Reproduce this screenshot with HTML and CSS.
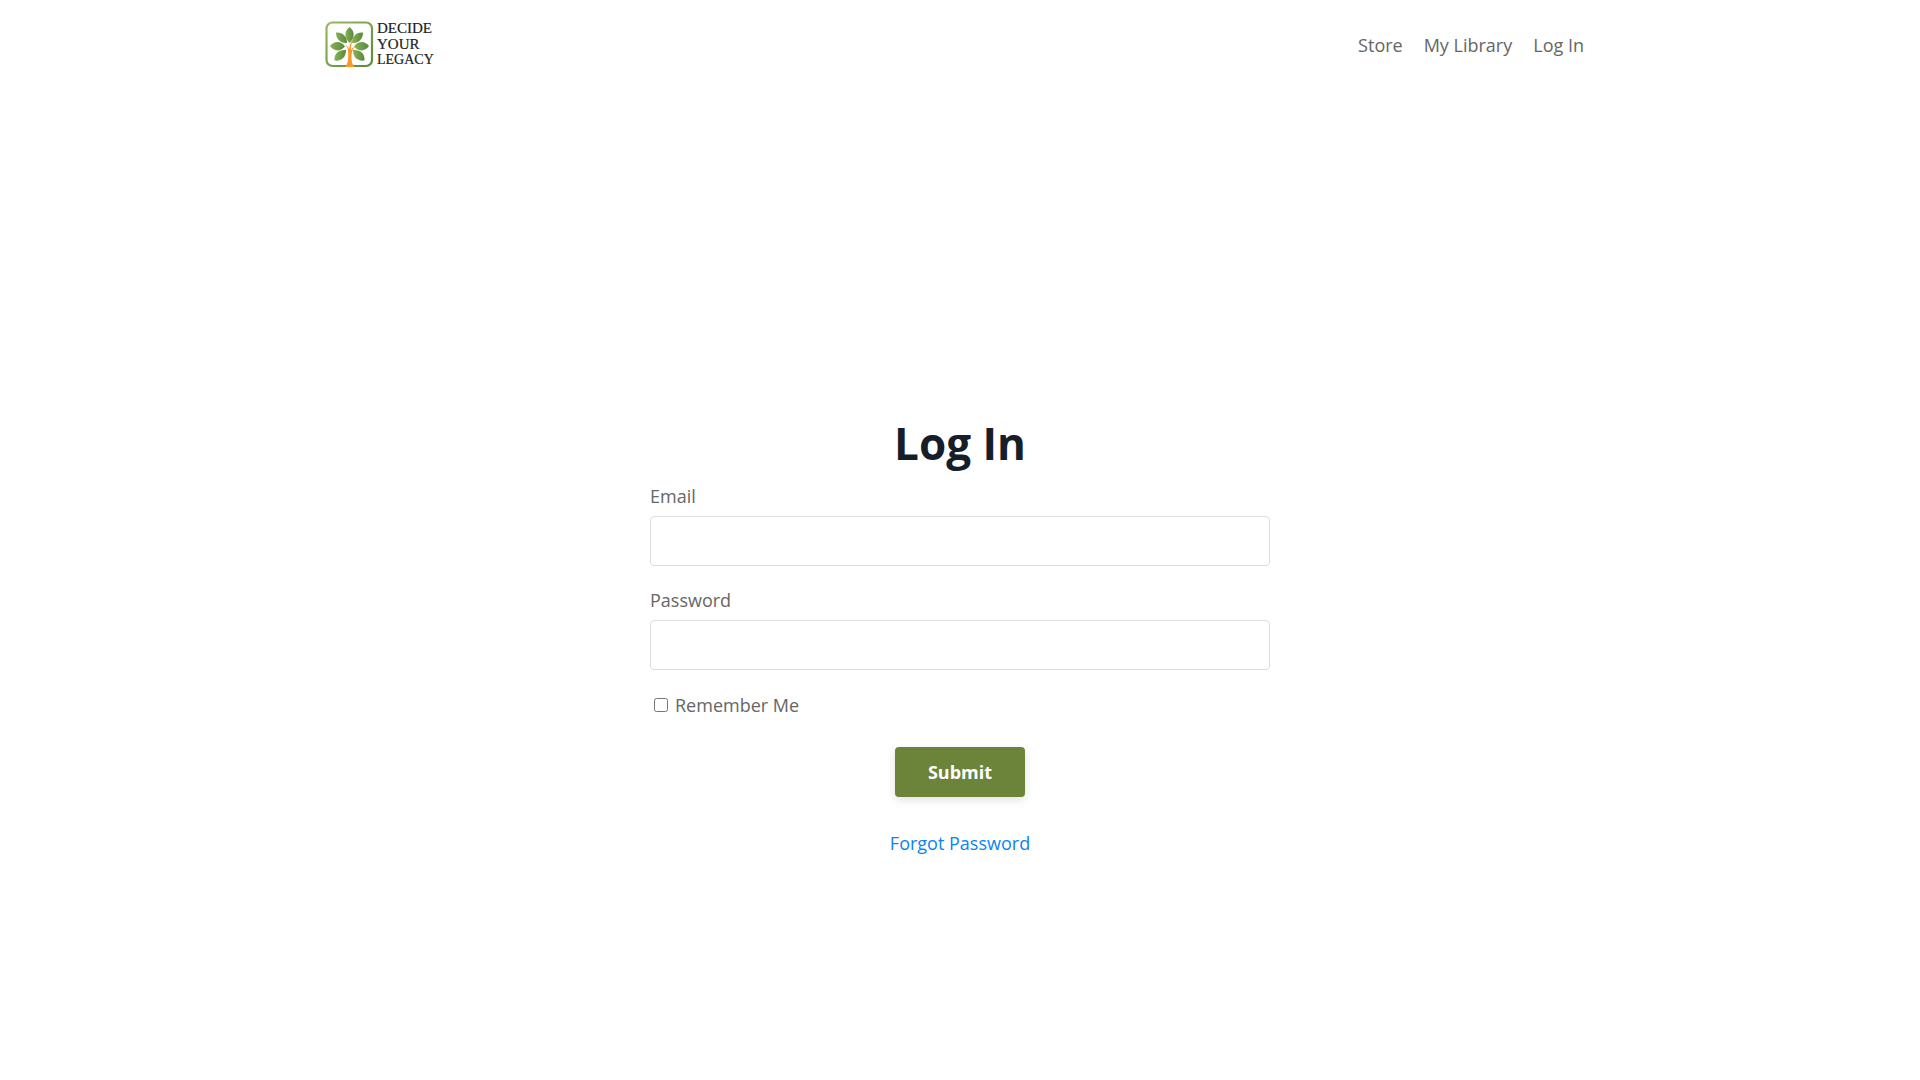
FILE: index.html
```html
<!DOCTYPE html>
<html lang="en">
<head>
  <meta charset="utf-8">
  <meta name="viewport" content="width=device-width, initial-scale=1">
  <title>Log In</title>
  <link rel="stylesheet" href="styles.css">
</head>
<body>
  <header class="header">
    <a class="logo" href="#" aria-label="Decide Your Legacy">
      <svg width="110" height="48" viewBox="0 0 110 48">
        <defs>
          <linearGradient id="frame" x1="0" y1="0" x2="1" y2="1">
            <stop offset="0" stop-color="#9aba5c"/>
            <stop offset="1" stop-color="#5a8a3c"/>
          </linearGradient>
          <linearGradient id="leaf" x1="0" y1="0" x2="1" y2="0">
            <stop offset="0" stop-color="#8bb056"/>
            <stop offset="1" stop-color="#568a3e"/>
          </linearGradient>
        </defs>
        <rect x="1.500" y="1.500" width="45.500" height="43.500" rx="6" fill="#fff" stroke="url(#frame)" stroke-width="2.200"/>
        <g fill="url(#leaf)">
          <path d="M24.500 6C30 10 30 17 24.500 22C19 17 19 10 24.500 6Z"/>
          <path d="M11 11.500C18 11 22 15.500 22 22C15 22.500 11 18 11 11.500Z"/>
          <path d="M38 11.500C31 11 27 15.500 27 22C34 22.500 38 18 38 11.500Z"/>
          <path d="M5 25C9.500 19.500 16 20 20 25.500C15 31 9 30.500 5 25Z"/>
          <path d="M44 25C39.500 19.500 33 20 29 25.500C34 31 40 30.500 44 25Z"/>
          <path d="M9.500 39.500C9 32 14 28.500 21 29C21 36 16.500 40.500 9.500 39.500Z"/>
          <path d="M39.500 39.500C40 32 35 28.500 28 29C28 36 32.500 40.500 39.500 39.500Z"/>
        </g>
        <path d="M20 23C22 25 23 26 24 28C25 23 26 20 28 18C26.500 22 26 25 26 29C27 27.500 28 26.500 30 25.500C27 29 26.500 32 26.500 36C26.500 41 27.500 44 29.500 46H19.500C22.500 44 23 40 23.200 36C23.500 30 23 27 20 23Z" fill="#f79a2b"/>
        <g class="logo-text">
          <text x="52" y="12" font-size="15">DECIDE</text>
          <text x="52" y="28" font-size="15">YOUR</text>
          <text x="52" y="43" font-size="14">LEGACY</text>
        </g>
      </svg>
    </a>
    <nav class="nav">
      <a class="nav-link" href="#">Store</a>
      <a class="nav-link" href="#">My Library</a>
      <a class="nav-link" href="#">Log In</a>
    </nav>
  </header>
  <main class="login">
    <h1 class="title">Log In</h1>
    <form class="form">
      <div class="field">
        <label for="email">Email</label>
        <input class="input" id="email" type="email">
      </div>
      <div class="field">
        <label for="password">Password</label>
        <input class="input" id="password" type="password">
      </div>
      <label class="remember"><input class="check" type="checkbox"> Remember Me</label>
      <button class="submit" type="submit">Submit</button>
      <a class="forgot" href="#">Forgot Password</a>
    </form>
  </main>
</body>
</html>
```
FILE: styles.css
```css
* {
  box-sizing: border-box;
}

body {
  margin: 0;
  background: #fff;
  color: #666;
  font: 18px/28px "Open Sans", sans-serif;
}

.header {
  display: flex;
  align-items: center;
  justify-content: space-between;
  max-width: 1300px;
  height: 89px;
  margin: 0 auto;
  padding: 0 26px 0 15px;
}

.logo svg {
  display: block;
}

.logo-text {
  fill: #222;
  stroke: #222;
  stroke-width: 0.2;
  font-family: "Liberation Serif", serif;
}

.nav {
  display: flex;
  gap: 21px;
}

.nav-link {
  color: inherit;
  text-decoration: none;
}

.login {
  max-width: 660px;
  margin: 0 auto;
  padding: 325px 20px 40px;
}

.title {
  margin: 0 0 10px;
  color: #161e2a;
  font-size: 44px;
  line-height: 58px;
  font-weight: 700;
  text-align: center;
}

.form {
  display: flex;
  flex-direction: column;
}

.field {
  display: flex;
  flex-direction: column;
  gap: 6px;
  margin-bottom: 20px;
}

.input {
  width: 100%;
  height: 50px;
  padding: 0 16px;
  border: 1px solid #ddd;
  border-radius: 4px;
  background: #fff;
  color: inherit;
  font: inherit;
}

.remember {
  display: flex;
  align-items: center;
  gap: 7px;
  align-self: flex-start;
  margin-top: 1px;
}

.check {
  width: 14px;
  height: 14px;
  margin: 0 0 0 4px;
}

.submit {
  align-self: center;
  height: 50px;
  margin: 28px 0 32px;
  padding: 0 33px;
  border: 0;
  border-radius: 4px;
  background: #6b8439;
  box-shadow: 0 3px 10px rgba(0, 0, 0, 0.12);
  color: #fff;
  font: inherit;
  font-weight: 700;
}

.forgot {
  align-self: center;
  color: #0a84f0;
  text-decoration: none;
}
```
